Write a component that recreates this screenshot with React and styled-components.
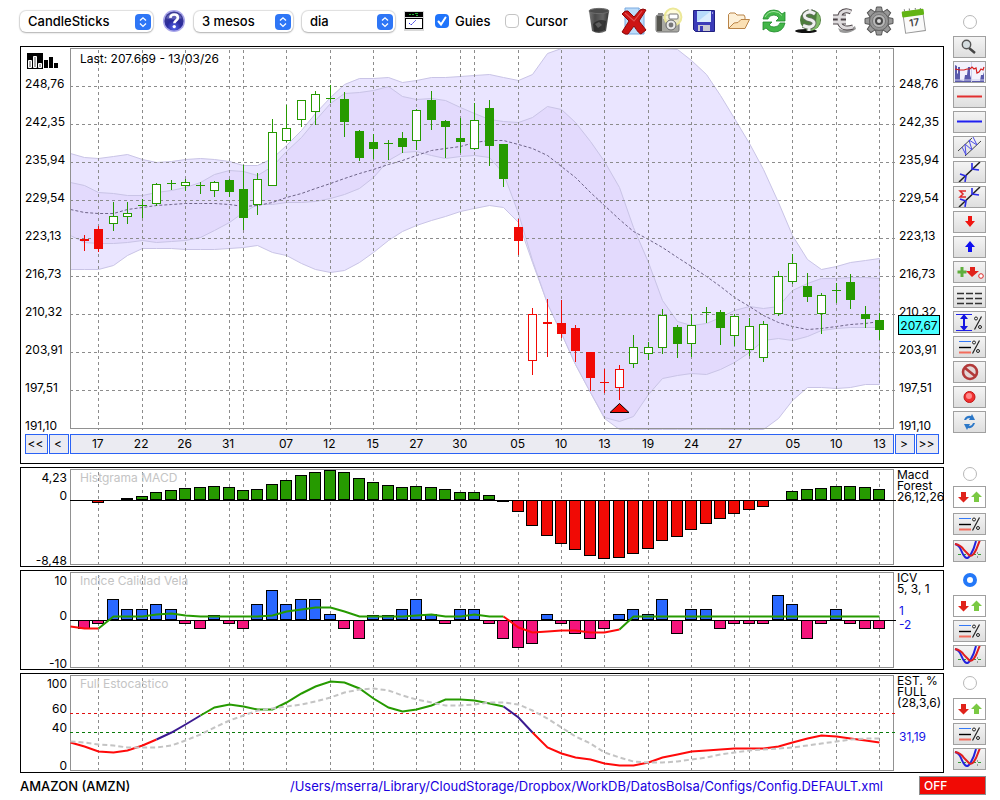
import { useState } from 'react';
import styled, { createGlobalStyle } from 'styled-components';

const GlobalStyle = createGlobalStyle`
	* {
		box-sizing: border-box;
	}

	body {
		margin: 0;
		background: #fff;
		color: #000;
		font-family: Inter, 'Liberation Sans', sans-serif;
		font-size: 12px;
		line-height: 14px;
	}

	button,
	input,
	select {
		margin: 0;
		font: inherit;
		color: inherit;
	}
`;

/* ---------- data ---------- */

// one slot per trading day, slot 0 is the left edge of the plots
const dayX = (k) => Math.floor(70.02 + 14.455 * k);

const GUIDES = [
	2, 5, 8, 11, 12, 15, 18, 21, 24, 27, 28, 31, 34, 37, 40, 43, 46, 47, 50, 53,
	56,
];

const DATES = [
	[2, '17'],
	[5, '22'],
	[8, '26'],
	[11, '31'],
	[15, '07'],
	[18, '12'],
	[21, '15'],
	[24, '27'],
	[27, '30'],
	[31, '05'],
	[34, '10'],
	[37, '13'],
	[40, '19'],
	[43, '24'],
	[46, '27'],
	[50, '05'],
	[53, '10'],
	[56, '13'],
];

const PRICES = [
	'248,76',
	'242,35',
	'235,94',
	'229,54',
	'223,13',
	'216,73',
	'210,32',
	'203,91',
	'197,51',
	'191,10',
];

// high, body top, body bottom, low, kind (f filled, h hollow, d doji), red
const CANDLES = [
	[235, 239, 241, 251, 'f', 1],
	[226, 229, 249, 252, 'f', 1],
	[202, 216, 223, 231, 'h'],
	[202, 213, 216, 224, 'h'],
	[199, 205, 206, 218, 'd'],
	[183, 184, 203, 206, 'h'],
	[180, 183, 184, 190, 'd'],
	[179, 182, 185, 191, 'h'],
	[182, 185, 186, 194, 'd'],
	[181, 182, 190, 197, 'h'],
	[179, 180, 192, 197, 'f'],
	[165, 189, 218, 230, 'f'],
	[173, 179, 204, 215, 'h'],
	[119, 132, 185, 186, 'h'],
	[105, 128, 140, 142, 'h'],
	[100, 100, 119, 127, 'h'],
	[91, 94, 111, 125, 'h'],
	[85, 98, 99, 103, 'd'],
	[92, 99, 122, 137, 'f'],
	[130, 131, 158, 161, 'f'],
	[134, 142, 149, 159, 'f'],
	[140, 143, 144, 160, 'd'],
	[132, 138, 147, 153, 'f'],
	[109, 110, 140, 150, 'h'],
	[91, 100, 120, 130, 'f'],
	[120, 121, 127, 158, 'f'],
	[118, 138, 142, 153, 'f'],
	[103, 120, 148, 150, 'h'],
	[100, 108, 146, 166, 'f'],
	[144, 144, 179, 187, 'f'],
	[219, 227, 241, 255, 'f', 1],
	[308, 314, 360, 375, 'h', 1],
	[299, 322, 324, 357, 'f', 1],
	[300, 323, 334, 338, 'f', 1],
	[325, 328, 351, 362, 'f', 1],
	[352, 352, 378, 391, 'f', 1],
	[369, 382, 383, 393, 'd', 1],
	[365, 369, 387, 400, 'h', 1],
	[335, 347, 363, 368, 'h'],
	[342, 347, 353, 360, 'h'],
	[309, 315, 347, 354, 'h'],
	[325, 327, 344, 358, 'f'],
	[314, 325, 343, 357, 'h'],
	[307, 312, 313, 323, 'd'],
	[310, 312, 328, 345, 'f'],
	[314, 316, 335, 346, 'h'],
	[318, 326, 349, 356, 'h'],
	[321, 324, 357, 362, 'h'],
	[271, 276, 313, 316, 'h'],
	[254, 263, 281, 284, 'h'],
	[273, 286, 297, 302, 'f'],
	[293, 295, 313, 334, 'h'],
	[283, 290, 291, 303, 'd'],
	[274, 282, 300, 309, 'f'],
	[306, 314, 319, 328, 'f'],
	[313, 320, 330, 340, 'f'],
];

const OUTER_TOP = [
	153, 157, 158, 156, 154, 159, 162, 161, 159, 158, 159, 161, 165, 165, 158,
	145, 130, 113, 97, 84, 78, 78, 77, 82, 80, 77, 77, 76, 75, 74, 77, 80, 74,
	53, 48, 48, 48, 48, 48, 48, 48, 48, 49, 60, 74, 95, 118, 143, 169, 202, 235,
	259, 269, 266, 262, 260, 258,
];
const INNER_TOP = [
	182, 185, 192, 193, 195, 195, 192, 190, 187, 182, 174, 170, 171, 175, 166,
	151, 137, 120, 103, 93, 92, 90, 86, 96, 99, 98, 100, 107, 113, 119, 121,
	122, 117, 106, 109, 122, 141, 161, 187, 227, 262, 300, 321, 325, 323, 317,
	310, 306, 308, 306, 290, 283, 278, 278, 277, 277, 278,
];
const INNER_LOW = [
	235, 242, 243, 243, 242, 240, 242, 241, 240, 237, 230, 222, 212, 204, 204,
	202, 202, 201, 198, 194, 188, 177, 160, 152, 151, 155, 158, 156, 155, 157,
	173, 213, 260, 303, 333, 364, 392, 417, 421, 416, 394, 378, 375, 373, 374,
	369, 362, 352, 340, 338, 340, 336, 330, 328, 327, 327, 327,
];
const OUTER_LOW = [
	269, 269, 269, 265, 255, 248, 248, 248, 249, 249, 249, 248, 247, 245, 252,
	255, 263, 269, 272, 270, 262, 252, 240, 231, 225, 220, 216, 211, 208, 205,
	207, 222, 262, 303, 333, 364, 392, 418, 429, 429, 429, 429, 429, 429, 429,
	429, 429, 429, 429, 418, 400, 387, 387, 388, 387, 384, 384,
];
const AVERAGE = [
	209, 212, 213, 213, 209, 207, 205, 204, 203, 203, 203, 204, 206, 205, 202,
	197, 193, 188, 183, 178, 173, 169, 164, 160, 155, 150, 148, 146, 142, 140,
	140, 144, 148, 155, 166, 177, 192, 205, 219, 231, 239, 247, 257, 266, 276,
	286, 297, 306, 315, 322, 326, 329, 328, 326, 324, 323, 321,
];

// bar ends measured from the zero line, positive is up
const MACD = [
	0, -3, 0, 2, 4, 8, 10, 12, 13, 14, 13, 10, 11, 16, 20, 25, 28, 30, 28, 22,
	18, 15, 13, 14, 13, 11, 8, 8, 5, -2, -12, -26, -36, -44, -50, -56, -59, -58,
	-54, -49, -41, -37, -30, -24, -19, -14, -10, -7, 0, 9, 11, 12, 14, 14, 13,
	11,
];
const ICV = [
	-9, -4, 21, 11, 11, 16, 11, -4, -9, 5, -4, -9, 16, 30, 16, 21, 21, 6, -9,
	-19, 5, 5, 11, 21, 6, -4, 11, 11, -4, -19, -28, -24, 6, -4, -14, -19, -9, 6,
	11, 6, 21, -14, 11, 11, -9, -4, -4, -4, 25, 16, -19, -4, 11, -4, -9, -9,
];
const ICV_LINE = [
	626, 628, 628, 616, 616, 616, 614, 613, 615, 616, 616, 616, 616, 616, 615,
	611, 609, 607, 607, 611, 616, 616, 616, 616, 615, 614, 616, 616, 614, 616,
	616, 627, 632, 631, 630, 630, 632, 632, 629, 616, 616, 616, 616, 616, 616,
	616, 616, 616, 616, 616, 616, 616, 616, 616, 616, 616, 616,
];
const STOCH = [
	742, 746, 751, 752, 750, 745, 739, 732, 724, 715, 707, 704, 706, 709, 709,
	702, 693, 686, 681, 682, 688, 698, 707, 711, 709, 705, 699, 699, 700, 703,
	706, 717, 732, 747, 753, 757, 759, 763, 765, 765, 762, 757, 754, 751, 750,
	749, 748, 748, 748, 746, 742, 738, 735, 736, 738, 740, 742,
];
const STOCH_SLOW = [
	741, 742, 744, 745, 747, 747, 747, 745, 740, 734, 727, 720, 715, 710, 708,
	706, 704, 701, 697, 692, 689, 688, 690, 695, 699, 702, 705, 705, 704, 702,
	702, 704, 710, 718, 727, 736, 743, 752, 757, 761, 762, 762, 761, 759, 757,
	754, 752, 750, 749, 748, 747, 745, 743, 741, 739, 738, 738,
];

const GREEN = '#269a00';
const RED = '#f10a05';

/* ---------- styled parts ---------- */

const Page = styled.div`
	display: grid;
	grid-template-columns: minmax(0, 1fr) 33px;
	column-gap: 9px;
	row-gap: 3px;
	padding: 0 14px 0 20px;
`;

const Toolbar = styled.header`
	display: flex;
	align-items: center;
	height: 46px;
	padding-bottom: 4px;
	font-size: 13px;
	font-weight: 500;
`;

const Picker = styled.div`
	position: relative;
	flex: none;
	width: ${(p) => p.$width}px;
	margin-right: 9px;

	& select {
		width: 100%;
		height: 21px;
		padding: 0 24px 0 8px;
		border: 0;
		border-radius: 6px;
		background: #fff;
		box-shadow: 0 0 1px 1px rgba(0, 0, 0, 0.12), 0 1px 2px rgba(0, 0, 0, 0.22);
		appearance: none;
	}

	& svg {
		position: absolute;
		top: 3px;
		right: 1px;
		pointer-events: none;
	}
`;

const IconButton = styled.button`
	display: flex;
	flex: none;
	align-items: center;
	justify-content: center;
	width: ${(p) => p.$width || 35}px;
	height: 32px;
	padding: 0;
	border: 0;
	background: none;
`;

const Check = styled.label`
	display: flex;
	align-items: center;
	gap: 6px;
	margin-left: ${(p) => p.$indent}px;

	& input {
		width: 14px;
		height: 14px;
		border: 1px solid #c4c4c4;
		border-radius: 4px;
		background: #fff;
		appearance: none;
	}

	& input:checked {
		border: 0;
		background: #1f74fb;
	}

	& span {
		display: grid;
	}

	& span > * {
		grid-area: 1 / 1;
	}

	& svg {
		pointer-events: none;
	}
`;

const IconStrip = styled.div`
	display: flex;
	margin-left: 14px;
`;

const Panel = styled.section`
	display: grid;
	grid-template-columns: 49px minmax(0, 1fr) 47px;
	overflow: hidden;
	border: 1px solid #000;
`;

const Stage = styled.div`
	position: relative;
`;

const Plot = styled.svg`
	display: block;
	width: 100%;
	height: ${(p) => p.$height}px;
`;

const Caption = styled.h2`
	position: absolute;
	top: ${(p) => p.$top || 3}px;
	left: 10px;
	margin: 0;
	font-size: 12px;
	font-weight: 400;
	color: ${(p) => p.$color || '#c4c4c4'};
`;

const PriceAxis = styled.div`
	display: grid;
	grid-template-rows: 30px;
	grid-auto-rows: 38px;
	height: 384px;
	padding-left: ${(p) => p.$indent}px;

	& svg {
		margin: 6px 0 0 2px;
	}
`;

const SideAxis = styled.div`
	display: grid;
	grid-template-rows: ${(p) => p.$rows};
	height: 98px;
	padding: 3px 3px 0 0;
	text-align: right;
`;

const LastPrice = styled.output`
	position: absolute;
	top: 268px;
	right: -44px;
	width: 42px;
	height: 20px;
	border: 1px solid #000;
	background: #48ffff;
	line-height: 19px;
	text-align: center;
`;

const Timeline = styled.nav`
	display: flex;
	grid-column: 1 / -1;
	gap: 1px;
	padding: 3px 4px 9px;
`;

const Step = styled.button`
	width: ${(p) => p.$width}px;
	height: 20px;
	padding: 0 2px 0 0;
	border: 1px solid #2a62f5;
	background: #ebebf2;
`;

const Dates = styled.div`
	display: grid;
	flex: 1;
	grid-template-columns: repeat(56, minmax(0, 1fr));
	align-items: center;
	height: 20px;
	padding: 0 6px 0 5px;
	border: 1px solid #2a62f5;
	background: #ebebf2;
`;

const DateMark = styled.span`
	grid-column: ${(p) => p.$slot};
	justify-self: center;
`;

const Legend = styled.div`
	padding: 1px 0 0 1px;
	line-height: 11px;
	white-space: nowrap;

	& p {
		margin: 0;
	}
`;

const Readout = styled.div`
	margin-top: ${(p) => p.$top}px;
	padding-left: 2px;
	color: #1414e6;
	line-height: 14px;
`;

const Tools = styled.aside`
	display: flex;
	flex-direction: column;
	gap: ${(p) => p.$gap}px;
	padding-top: ${(p) => p.$top}px;
`;

const PanelRadio = styled.input`
	align-self: center;
	flex: none;
	width: 14px;
	height: 14px;
	margin-bottom: ${(p) => p.$after}px;
	border: 1px solid #b8b8b8;
	border-radius: 50%;
	background: #fff;
	appearance: none;

	&:checked {
		border: 4px solid #2478f8;
	}
`;

const ToolButton = styled.button`
	flex: none;
	width: 33px;
	height: 22px;
	padding: 0;
	border: 1px solid #a0a0a0;
	background: ${(p) =>
		p.$plain ? '#fff' : 'linear-gradient(#f4f4f4, #dedede)'};

	& svg {
		display: block;
	}
`;

const Footer = styled.footer`
	display: flex;
	grid-column: 1 / -1;
	align-items: center;
	font-size: 13px;
	font-weight: 500;

	& a {
		margin: 0 36px 0 auto;
		color: #1a00e0;
		font-weight: 400;
		text-decoration: none;
	}
`;

const OffButton = styled.button`
	width: 67px;
	height: 19px;
	padding: 0 4px;
	border: 1px solid #8c8c8c;
	background: #f10a05;
	color: #fff;
	font-size: 12px;
	line-height: 14px;
	text-align: left;
`;

/* ---------- toolbar icons ---------- */

const Arrows = () => (
	<svg width="17" height="16" viewBox="0 0 17 16">
		<rect width="16" height="16" rx="4" fill="#2e76f6" />
		<path
			d="M5 6.6 8 3.8l3 2.8M5 9.6l3 2.8 3-2.8"
			fill="none"
			stroke="#fff"
			strokeWidth="1.3"
		/>
	</svg>
);

const HelpIcon = () => (
	<svg width="26" height="26" viewBox="0 0 26 26">
		<defs>
			<radialGradient id="help" cx="50%" cy="85%" r="75%">
				<stop offset="0" stopColor="#5566ee" />
				<stop offset="0.5" stopColor="#2a2a9c" />
				<stop offset="1" stopColor="#3c3c94" />
			</radialGradient>
		</defs>
		<circle cx="13" cy="13" r="12" fill="#a9a6ea" />
		<circle cx="13" cy="13" r="10.4" fill="url(#help)" />
		<path d="M4.5 10a9 8 0 0 1 17 0Q13 13 4.5 10Z" fill="#7b7bcc" opacity="0.6" />
		<path
			d="M9 9.6C9.2 7 11 6 13.2 6c2.4 0 4 1.4 4 3.4 0 3-3.8 3-3.8 6"
			fill="none"
			stroke="#fff"
			strokeWidth="2.8"
		/>
		<circle cx="13.3" cy="19" r="1.8" fill="#fff" />
	</svg>
);

const ConfigIcon = () => (
	<svg width="20" height="20" viewBox="0 0 20 20">
		<rect width="20" height="20" fill="#d9d9d9" />
		<rect x="1" y="1" width="18" height="5" fill="#000" />
		<path d="M5 3.5h2m1 0h2m1-1h3m-2 2h2" stroke="#20b030" />
		<rect x="1.5" y="7.5" width="17" height="10" fill="#fff" stroke="#000" />
		<path d="m5 12 2 2 5-5" fill="none" stroke="#2222e0" strokeDasharray="2 1" />
	</svg>
);

const TrashIcon = () => (
	<svg width="24" height="28" viewBox="0 0 24 28">
		<defs>
			<linearGradient id="bin" x1="0" x2="1">
				<stop offset="0" stopColor="#777" />
				<stop offset="0.3" stopColor="#4a4a4a" />
				<stop offset="0.7" stopColor="#666" />
				<stop offset="1" stopColor="#333" />
			</linearGradient>
		</defs>
		<path d="M2 4 5 24q7 4 14 0L22 4Z" fill="url(#bin)" />
		<ellipse cx="12" cy="4" rx="10" ry="2.6" fill="#4c4c4c" stroke="#6c6c6c" />
		<path d="M6 17q6-6 13-3l-1 9q-5 3-11 1Z" fill="#222" opacity="0.7" />
		<path d="m8 17 4-2 3 3-4 3Z" fill="#888" opacity="0.5" />
	</svg>
);

const DeleteIcon = () => (
	<svg width="26" height="28" viewBox="0 0 26 28">
		<path d="M4 1h14l5 5v21H4Z" fill="#bcdcfa" stroke="#7aaae0" />
		<path d="M18 1v5h5" fill="#eef6ff" stroke="#7aaae0" />
		<path
			d="M1 7q3-4 6-3l6 6 6-7q3-2 6 0l-7 11 7 9-5 4q-2 0-7-8l-6 8q-3 1-6-2l7-11Z"
			fill="#cc1414"
			stroke="#8e0808"
		/>
		<path d="m4 6 9 8 8-10" fill="none" stroke="#e05050" strokeWidth="1.2" />
	</svg>
);

const CameraIcon = () => (
	<svg width="28" height="28" viewBox="0 0 28 28">
		<rect x="1" y="8" width="23" height="17" rx="2" fill="#a8a8a2" stroke="#777" />
		<rect x="2" y="9" width="5" height="15" fill="#55554f" />
		<rect x="3" y="6" width="5" height="3" fill="#888" />
		<rect x="8" y="9" width="15" height="3" fill="#dcdcd8" />
		<circle cx="18" cy="10" r="8.4" fill="#fffbd0" fillOpacity="0.75" stroke="#ece898" strokeWidth="2" />
		<rect x="14" y="7" width="9" height="5" rx="1" fill="#fff" stroke="#777" />
		<circle cx="16" cy="18" r="5" fill="#e8e8e8" stroke="#666" />
		<circle cx="16" cy="18" r="2.4" fill="#777" />
	</svg>
);

const SaveIcon = () => (
	<svg width="22" height="22" viewBox="0 0 22 22">
		<path d="M.5.5h21v21h-19l-2-2Z" fill="#3b3bb8" stroke="#202080" />
		<rect x="4" y="1" width="14" height="11" fill="#b8dcfa" />
		<path d="M4 12 18 1v11Z" fill="#dceefd" />
		<rect x="5" y="15" width="12" height="6" fill="#c9c9d2" />
		<rect x="7" y="16" width="3" height="5" fill="#3b3bb8" />
		<path d="M19 3h1" stroke="#fff" />
	</svg>
);

const FolderIcon = () => (
	<svg width="24" height="20" viewBox="0 0 24 20">
		<path d="M1.5 17V3.5L3 2h5l2 2h7l1 2v4" fill="#fdf0d8" stroke="#b98448" />
		<path d="M1.5 17.5 7 12l4-.5 3-3h8.5L18 17.5Z" fill="#fbe0b4" stroke="#b98448" />
	</svg>
);

const ReloadIcon = () => (
	<svg width="26" height="26" viewBox="0 0 26 26">
		<path
			d="M2 11Q4 2 13 2q5 0 8 4l3-2v9h-9l3-3q-2-3-5-3-5 0-6 4Z"
			fill="#43b649"
			stroke="#1f8a2c"
			strokeWidth="0.8"
		/>
		<path
			d="M24 15q-2 9-11 9-5 0-8-4l-3 2v-8h9l-3 3q2 2 5 2 5 0 6-4Z"
			fill="#43b649"
			stroke="#1f8a2c"
			strokeWidth="0.8"
		/>
		<path d="M4 9q3-5.5 9-5.5 5 0 8 4" fill="none" stroke="#a4e4a0" />
	</svg>
);

const DollarIcon = () => (
	<svg width="28" height="26" viewBox="0 0 28 26">
		<ellipse cx="11" cy="23" rx="11" ry="2" fill="#111" />
		<circle cx="15.5" cy="12" r="10.5" fill="#4d7d3c" />
		<path d="M22 4q6 7 1 15-4 4-9 4 6-4 7-9Z" fill="#80bb66" />
		<path
			d="M20 6q-4-3-8-1.5-4 2-2 5 2 2 6 2.5 5 2 2 5.5-3 3-10 0M15 1v3m-1 15v4"
			fill="none"
			stroke="#667260"
			strokeWidth="5"
		/>
		<path
			d="M20 6q-4-3-8-1.5-4 2-2 5 2 2 6 2.5 5 2 2 5.5-3 3-10 0M15 1v3m-1 15v4"
			fill="none"
			stroke="#efefef"
			strokeWidth="3"
		/>
	</svg>
);

const EuroIcon = () => (
	<svg width="26" height="26" viewBox="0 0 26 26">
		<path d="M7 20q7 5 17-2l1 3q-8 6-16 3Z" fill="#999" />
		<path
			d="M20 4q-6-3-10 1-3 5-1 11 3 6 13 3M2 9h13M2 14h13"
			fill="none"
			stroke="#4c4448"
			strokeWidth="5"
		/>
		<path
			d="M20 4q-6-3-10 1-3 5-1 11 3 6 13 3M2 9h13M2 14h13"
			fill="none"
			stroke="#dedbdd"
			strokeWidth="3"
		/>
	</svg>
);

const TEETH = [0, 45, 90, 135, 180, 225, 270, 315];

const GearIcon = () => (
	<svg width="30" height="30" viewBox="0 0 30 30">
		{TEETH.map((a) => (
			<path
				key={a}
				d="m11.5 6 1-5h5l1 5Z"
				fill="#999"
				stroke="#555"
				transform={`rotate(${a} 15 15)`}
			/>
		))}
		<circle cx="15" cy="15" r="9.5" fill="#959595" stroke="#666" />
		<circle cx="15" cy="15" r="6.5" fill="#b9b9b9" stroke="#777" />
		<circle cx="15" cy="15" r="4" fill="#4a4a4a" />
		<circle cx="15" cy="15" r="2" fill="#ddd" />
	</svg>
);

const CalendarIcon = () => (
	<svg width="26" height="26" viewBox="0 0 26 26">
		<g transform="rotate(-8 13 13)">
			<rect x="3" y="3" width="20" height="21" fill="#fafafa" stroke="#999" />
			<rect x="2" y="2" width="22" height="6" rx="1" fill="#62b414" />
			<path d="M5 2V0m5 2V0m6 2V0m5 2V0" stroke="#777" />
			<text
				x="13"
				y="18"
				textAnchor="middle"
				fontFamily="Inter, sans-serif"
				fontSize="10"
				fontWeight="600"
				fill="#444"
			>
				17
			</text>
		</g>
	</svg>
);

const BarsIcon = () => (
	<svg width="32" height="16" viewBox="0 0 32 16">
		<path d="M0 0h16v16H0Z" />
		<path d="M1.5 14.5v-7h3v7zM6.5 14.5v-11h3v11zM11.5 14.5v-4h3v4z" fill="#aaa" stroke="#fff" />
		<path d="M17 15V7h4v8zM22 15V4h4v11zM27 15v-5h4v5z" />
	</svg>
);

/* ---------- side tool icons, all drawn on a 31x20 face ---------- */

const Percent = ({ x = 20, y = 4 }) => (
	<g transform={`translate(${x} ${y})`} fill="none" stroke="#222">
		<circle cx="2" cy="2.5" r="1.5" />
		<circle cx="6" cy="11" r="1.5" />
		<path d="M7.5.5.5 13.5" strokeWidth="1.2" />
	</g>
);

const LevelsIcon = () => (
	<>
		<path d="M5 4.5h12" stroke="#3478f6" />
		<path d="M5 10.5h12" stroke="#000" strokeWidth="1.4" />
		<path d="M5 15.5h12" stroke="#f36c5c" strokeWidth="2" />
		<Percent x={18} y={3} />
	</>
);

const UpDownIcon = () => (
	<>
		<path d="M9.5 15.5 4 10h3V5h5v5h3Z" fill="#e0231b" />
		<path d="M22.5 4.5 17 10h3v5h5v-5h3Z" fill="#7ac943" />
	</>
);

const CrossingIcon = () => (
	<>
		<path d="M4 13.5h24" stroke="#3a9a3a" strokeDasharray="3 2" />
		<path d="M23.5 11v8" stroke="#999" strokeDasharray="2 2" />
		<path d="M1 3q4 1 6 6 2 5 4 7 3 3 6-3 3-5 5-13" fill="none" stroke="#2222dd" strokeWidth="2" />
		<path d="M1 3q6 1 9 6l5 5q3 3 7-5l4-10" fill="none" stroke="#e02020" strokeWidth="2" />
	</>
);

const TrendIcon = () => (
	<>
		<path d="M5 20 26 0" stroke="#222" strokeWidth="1.5" />
		<path d="m6 12 6 2-1 6m7-19v6l7 1" fill="none" stroke="#2a2ae8" strokeWidth="1.6" />
	</>
);

const SIDE_TOOLS = [
	[
		'Zoom',
		<>
			<path d="m15 11 6 5" stroke="#444" strokeWidth="2.4" />
			<circle cx="12.5" cy="7.5" r="4.2" fill="#d5dde0" stroke="#555" strokeWidth="1.4" />
		</>,
	],
	[
		'Volume profile',
		<>
			<path d="M0 0h31v20H0Z" fill="#f2f2fc" />
			<path
				d="M1 20V3l2 1v7l1 1V5h2v13l4 1 1-6h2l1-8h2v8l2 6h8l1-6h2l1-3v10Z"
				fill="#5a5aac"
			/>
			<path d="M17.5 0v20M1 18h29" stroke="#ccccea" />
			<path d="m1 7 5 1h4l3-1h3l2-2 2 2 2-1 1 5 2-1 2-3 2 1 1-3" fill="none" stroke="#d61c1c" strokeWidth="1.2" />
		</>,
	],
	['Red line', <path d="M3 9.5h25" stroke="#e23030" strokeWidth="2" />],
	['Blue line', <path d="M3 9.5h25" stroke="#2020f0" strokeWidth="2" />],
	[
		'Channel',
		<>
			<path d="M4 14 18 1m-7 18L27 4" stroke="#444" />
			<path d="m8 10 4 8-1-11 7 6-3-10 8 5-4-8" fill="none" stroke="#4a4ae8" />
		</>,
	],
	['Trend', <TrendIcon />],
	[
		'Regression',
		<>
			<TrendIcon />
			<path d="M12 4H6l3 3-3 3h6" fill="none" stroke="#e02828" strokeWidth="1.5" />
		</>,
	],
	['Sell mark', <path d="m16 15-5-6h3V4h4v5h3Z" fill="#f01410" />],
	['Buy mark', <path d="m16 4-5 6h3v5h4v-5h3Z" fill="#1010f0" />],
	[
		'Add mark',
		<>
			<path d="M8 5v10M3.5 10h9" stroke="#5fae3c" strokeWidth="3" />
			<path d="m18 15-6-6h4V5h5v4h4Z" fill="#e0231b" />
			<circle cx="27" cy="14" r="2.3" fill="#fff" stroke="#e02828" />
		</>,
	],
	[
		'Grid lines',
		<path
			d="M3 6.5h25M3 11.5h25M3 16.5h25"
			stroke="#333"
			strokeWidth="1.5"
			strokeDasharray="7 2"
		/>,
	],
	[
		'Range',
		<>
			<path d="M2 2.500h16M2 18.500h16" stroke="#2020e8" />
			<path d="M10 4v13" stroke="#1414e0" strokeWidth="2" />
			<path d="m10 2-4 5h8Zm0 17-4-5h8Z" fill="#1414e0" />
			<Percent x={20} y={4} />
		</>,
	],
	['Levels', <LevelsIcon />],
	[
		'Clear',
		<>
			<circle cx="16" cy="10" r="7" fill="#e4d6d6" stroke="#b23a3a" strokeWidth="2.6" />
			<path d="m11 6 10 8" stroke="#b23a3a" strokeWidth="2.6" />
		</>,
	],
	[
		'Record',
		<>
			<circle cx="15.5" cy="10" r="5.5" fill="#f03030" stroke="#c01818" />
			<circle cx="15" cy="9" r="3" fill="#ff8a8a" />
		</>,
	],
	[
		'Refresh',
		<>
			<path d="M10 8q2-5 7-4l1-2 3 6h-6l1-2q-3 0-4 2Z" fill="#2c78c8" />
			<path d="M21 11q-2 6-7 5l-1 2-3-6h6l-1 2q3 0 4-3Z" fill="#2c78c8" />
		</>,
	],
];

const Tool = ({ name, plain, children }) => (
	<ToolButton type="button" aria-label={name} $plain={plain}>
		<svg width="31" height="20" viewBox="0 0 31 20">
			{children}
		</svg>
	</ToolButton>
);

/* ---------- charts ---------- */

const points = (values, from = 0) =>
	values.map((y, i) => `${dayX(from + i) + 0.5},${y + 0.5}`).join(' ');

const Guides = ({ top, bottom }) =>
	GUIDES.map((k) => (
		<line
			key={k}
			x1={dayX(k) + 0.5}
			x2={dayX(k) + 0.5}
			y1={top}
			y2={bottom}
			stroke="#8c8c8c"
			strokeDasharray="3 3"
		/>
	));

const Band = ({ top, low, fill }) => (
	<polygon
		points={`${points(top)} ${points(low).split(' ').reverse().join(' ')}`}
		fill={fill}
		stroke="#c9c4e6"
	/>
);

const Candle = ({ slot, data }) => {
	const [high, top, bottom, low, kind, red] = data;
	const x = dayX(slot);
	const color = red ? RED : GREEN;

	return (
		<g shapeRendering="crispEdges">
			<path d={`M${x + 0.5} ${high}V${low}`} stroke={color} />
			{kind === 'h' && (
				<rect
					x={x - 3.5}
					y={top + 0.5}
					width="8"
					height={bottom - top}
					fill="#fff"
					stroke={color}
				/>
			)}
			{kind !== 'h' && (
				<rect x={x - 4} y={top} width="9" height={bottom - top} fill={color} />
			)}
		</g>
	);
};

const PriceChart = () => (
	<Plot
		$height={384}
		viewBox="70 47 826 384"
		preserveAspectRatio="none"
		role="img"
		aria-label="CandleSticks"
	>
		<Band top={OUTER_TOP} low={OUTER_LOW} fill="#eae5ff" />
		<Band top={INNER_TOP} low={INNER_LOW} fill="#e3dafd" />
		<polyline
			points={points(AVERAGE)}
			fill="none"
			stroke="#6e6488"
			strokeDasharray="3 2"
		/>
		<Guides top={50} bottom={430} />
		{PRICES.slice(0, 9).map((price, i) => (
			<line
				key={price}
				x1="70"
				x2="896"
				y1={86.5 + 38 * i}
				y2={86.5 + 38 * i}
				stroke="#8c8c8c"
				strokeDasharray="3 3"
			/>
		))}
		<rect x="70.5" y="48.5" width="823" height="380" fill="none" stroke="#919191" />
		{CANDLES.map((data, i) => (
			<Candle key={i} slot={i + 1} data={data} />
		))}
		<path d="M619.5 403.5 610 412.5h19Z" fill={RED} stroke="#000" />
	</Plot>
);

const StudyPlot = ({ top, label, children }) => (
	<Plot
		$height={98}
		viewBox={`70 ${top} 826 98`}
		preserveAspectRatio="none"
		role="img"
		aria-label={label}
	>
		<Guides top={top + 4} bottom={top + 98} />
		<rect
			x="70.5"
			y={top + 1.5}
			width="823"
			height="95"
			fill="none"
			stroke="#919191"
		/>
		{children}
	</Plot>
);

const Bars = ({ values, zero, up, down }) => (
	<g shapeRendering="crispEdges">
		{values.map((v, i) => {
			if (!v) return null;
			const size = Math.abs(v) - 1;
			return (
				<rect
					key={i}
					x={dayX(i + 1) - 5.5}
					y={v > 0 ? zero - v + 0.5 : zero + 0.5}
					width="11"
					height={size}
					fill={v > 0 ? up : down}
					stroke="#000"
				/>
			);
		})}
		<path d={`M70 ${zero + 0.5}H896`} stroke="#000" />
	</g>
);

// piece of a series from one slot to another, in its own colour
const Segment = ({ values, from, to, color }) => (
	<polyline
		points={points(values.slice(from, to + 1), from)}
		fill="none"
		stroke={color}
		strokeWidth="2"
	/>
);

const StudyTools = ({ tight, selected, onSelect }) => (
	<Tools $gap={tight ? 5 : 3} $top={tight ? 0 : 3}>
		<PanelRadio
			type="radio"
			name="panel"
			aria-label="Select panel"
			checked={selected}
			onChange={onSelect}
			$after={tight ? 0 : 5}
		/>
		<Tool name="Buy and sell marks" plain>
			<UpDownIcon />
		</Tool>
		<Tool name="Levels">
			<LevelsIcon />
		</Tool>
		<Tool name="Crossings">
			<CrossingIcon />
		</Tool>
	</Tools>
);

const Select = ({ label, width, options }) => (
	<Picker $width={width}>
		<select aria-label={label}>
			{options.map((option) => (
				<option key={option}>{option}</option>
			))}
		</select>
		<Arrows />
	</Picker>
);

const HelpButton = styled(IconButton)`
	margin-right: 8px;
`;

const TOOLBAR_ICONS = [
	['Trash', TrashIcon],
	['Delete', DeleteIcon],
	['Snapshot', CameraIcon],
	['Save', SaveIcon],
	['Open', FolderIcon],
	['Reload', ReloadIcon],
	['Dollar', DollarIcon],
	['Euro', EuroIcon],
	['Settings', GearIcon],
	['Calendar', CalendarIcon],
];

const App = () => {
	const [panel, setPanel] = useState('icv');
	const [guides, setGuides] = useState(true);
	const [cursor, setCursor] = useState(false);

	return (
		<>
			<GlobalStyle />
			<Page>
				<div>
					<Toolbar>
						<Select label="Chart type" width={133} options={['CandleSticks']} />
						<HelpButton $width={24} type="button" aria-label="Help">
							<HelpIcon />
						</HelpButton>
						<Select label="Period" width={99} options={['3 mesos']} />
						<Select label="Interval" width={93} options={['dia']} />
						<IconButton $width={20} type="button" aria-label="Configuration">
							<ConfigIcon />
						</IconButton>
						<Check $indent={11}>
							<span>
								<input
									type="checkbox"
									checked={guides}
									onChange={() => setGuides(!guides)}
								/>
								{guides && (
									<svg width="14" height="14" viewBox="0 0 14 14">
										<path
											d="m3.5 7.5 2.5 3 4.5-7"
											fill="none"
											stroke="#fff"
											strokeWidth="2"
											strokeLinecap="round"
										/>
									</svg>
								)}
							</span>
							Guies
						</Check>
						<Check $indent={15}>
							<input
								type="checkbox"
								checked={cursor}
								onChange={() => setCursor(!cursor)}
							/>
							Cursor
						</Check>
						<IconStrip>
							{TOOLBAR_ICONS.map(([name, Icon]) => (
								<IconButton key={name} type="button" aria-label={name}>
									<Icon />
								</IconButton>
							))}
						</IconStrip>
					</Toolbar>
					<Panel>
						<PriceAxis $indent={4}>
							<BarsIcon />
							{PRICES.map((price) => (
								<span key={price}>{price}</span>
							))}
						</PriceAxis>
						<Stage>
							<PriceChart />
							<Caption $top={5} $color="#000">
								Last: 207.669 - 13/03/26
							</Caption>
							<LastPrice>207,67</LastPrice>
						</Stage>
						<PriceAxis $indent={3}>
							<span />
							{PRICES.map((price) => (
								<span key={price}>{price}</span>
							))}
						</PriceAxis>
						<Timeline>
							<Step type="button" $width={23}>
								&lt;&lt;
							</Step>
							<Step type="button" $width={20}>
								&lt;
							</Step>
							<Dates>
								{DATES.map(([slot, day]) => (
									<DateMark key={slot} $slot={slot}>
										{day}
									</DateMark>
								))}
							</Dates>
							<Step type="button" $width={20}>
								&gt;
							</Step>
							<Step type="button" $width={23}>
								&gt;&gt;
							</Step>
						</Timeline>
					</Panel>
				</div>
				<Tools $gap={3} $top={15}>
					<PanelRadio
						type="radio"
						name="panel"
						aria-label="Select panel"
						checked={panel === 'price'}
						onChange={() => setPanel('price')}
						$after={4}
					/>
					{SIDE_TOOLS.map(([name, icon]) => (
						<Tool key={name} name={name}>
							{icon}
						</Tool>
					))}
				</Tools>

				<Panel>
					<SideAxis $rows="18px 65px 14px">
						<span>4,23</span>
						<span>0</span>
						<span>-8,48</span>
					</SideAxis>
					<Stage>
						<StudyPlot top={468} label="Histgrama MACD">
							<Bars values={MACD} zero={500} up={GREEN} down={RED} />
						</StudyPlot>
						<Caption>Histgrama MACD</Caption>
					</Stage>
					<Legend>
						<p>Macd</p>
						<p>Forest</p>
						<p>26,12,26</p>
					</Legend>
				</Panel>
				<StudyTools
					tight
					selected={panel === 'macd'}
					onSelect={() => setPanel('macd')}
				/>

				<Panel>
					<SideAxis $rows="35px 48px 14px">
						<span>10</span>
						<span>0</span>
						<span>-10</span>
					</SideAxis>
					<Stage>
						<StudyPlot top={571} label="Indice Calidad Vela">
							<Bars values={ICV} zero={620} up="#2a68ff" down="#f4147c" />
							<Segment values={ICV_LINE} from={0} to={2} color="#ff0a0a" />
							<Segment values={ICV_LINE} from={2} to={30} color={GREEN} />
							<Segment values={ICV_LINE} from={30} to={38} color="#ff0a0a" />
							<Segment values={ICV_LINE} from={38} to={56} color={GREEN} />
						</StudyPlot>
						<Caption>Indice Calidad Vela</Caption>
					</Stage>
					<Legend>
						<p>ICV</p>
						<p>5, 3, 1</p>
						<Readout $top={10}>
							<p>1</p>
							<p>-2</p>
						</Readout>
					</Legend>
				</Panel>
				<StudyTools
					selected={panel === 'icv'}
					onSelect={() => setPanel('icv')}
				/>

				<Panel>
					<SideAxis $rows="25px 19px 38px 14px">
						<span>100</span>
						<span>60</span>
						<span>40</span>
						<span>0</span>
					</SideAxis>
					<Stage>
						<StudyPlot top={674} label="Full Estocastico">
							<path d="M70 713.5H896" stroke="#e01010" strokeDasharray="3 3" />
							<path d="M70 732.5H896" stroke="#0a7a0a" strokeDasharray="3 3" />
							<Segment values={STOCH} from={0} to={6} color="#ff0a0a" />
							<Segment values={STOCH} from={6} to={9} color="#3a1a90" />
							<Segment values={STOCH} from={9} to={30} color={GREEN} />
							<Segment values={STOCH} from={30} to={32} color="#3a1a90" />
							<Segment values={STOCH} from={32} to={56} color="#ff0a0a" />
							<polyline
								points={points(STOCH_SLOW)}
								fill="none"
								stroke="#c4c4c4"
								strokeWidth="2"
								strokeDasharray="5 3"
							/>
						</StudyPlot>
						<Caption>Full Estocastico</Caption>
					</Stage>
					<Legend>
						<p>EST. %</p>
						<p>FULL</p>
						<p>(28,3,6)</p>
						<Readout $top={22}>
							<p>31,19</p>
						</Readout>
					</Legend>
				</Panel>
				<StudyTools
					selected={panel === 'est'}
					onSelect={() => setPanel('est')}
				/>

				<Footer>
					<span>AMAZON (AMZN)</span>
					<a href="#config">
						/Users/mserra/Library/CloudStorage/Dropbox/WorkDB/DatosBolsa/Configs/Config.DEFAULT.xml
					</a>
					<OffButton type="button">OFF</OffButton>
				</Footer>
			</Page>
		</>
	);
};

export default App;
